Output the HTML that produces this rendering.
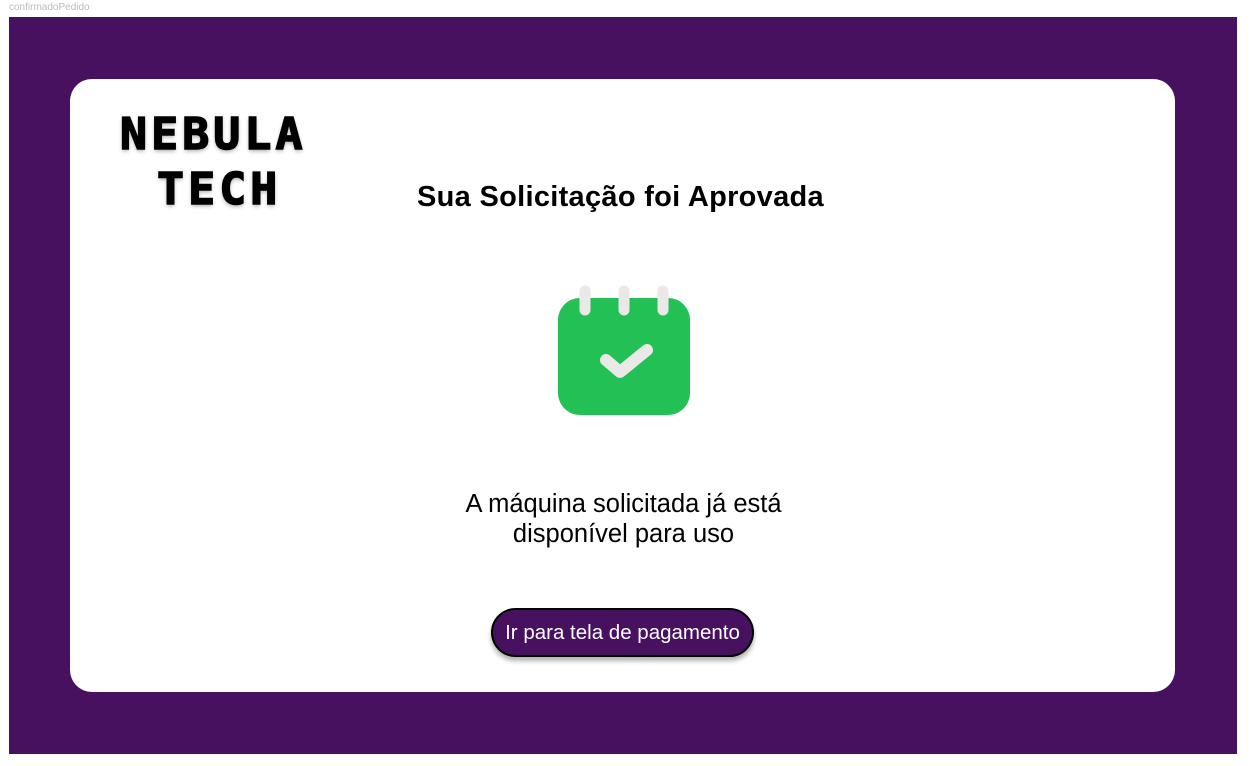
<!DOCTYPE html>
<html><head><style>
body{margin:0;width:1251px;height:766px;background:#fff;position:relative;font-family:"Liberation Sans",sans-serif;overflow:hidden}
.lbl{position:absolute;left:9px;top:2px;font-size:10px;color:#bbb}
.bg{position:absolute;left:9px;top:17px;width:1228px;height:737px;background:#471160}
.card{position:absolute;left:70px;top:79px;width:1105px;height:613px;background:#fff;border-radius:22px}
.logo{position:absolute;font-family:"DejaVu Sans Mono",monospace;font-weight:bold;font-size:44px;color:#000;text-shadow:0 2px 4px rgba(0,0,0,.35);letter-spacing:4px;transform-origin:0 0;transform:scaleX(1.02);line-height:1;-webkit-text-stroke:1.5px #000}
h1{position:absolute;left:0;width:1241px;top:181px;margin:0;text-align:center;font-size:29px;font-weight:bold;color:#000;letter-spacing:0.3px}
.txt{position:absolute;left:0;width:1247px;top:489px;text-align:center;font-size:25.5px;line-height:30px;color:#000}
.btn{position:absolute;left:491px;top:608px;width:263px;height:49px;box-sizing:border-box;background:#471160;border:2px solid #000;border-radius:25px;color:#fff;font-size:20.5px;text-align:center;line-height:45px;box-shadow:0 4px 5px rgba(0,0,0,.3)}
</style></head><body>
<div class="lbl">confirmadoPedido</div>
<div class="bg"></div>
<div class="card"></div>
<div class="logo" style="left:120px;top:113px">NEBULA</div>
<div class="logo" style="left:157px;top:168px">TECH</div>
<h1>Sua Solicitação foi Aprovada</h1>
<svg style="position:absolute;left:540px;top:270px" width="170" height="160">
<rect x="18" y="28" width="132" height="117" rx="22" fill="#22c055"/>
<g stroke="#ebe9e8" stroke-width="11" stroke-linecap="round" fill="none">
<line x1="45" y1="21" x2="45" y2="40"/><line x1="84" y1="21" x2="84" y2="40"/><line x1="123" y1="21" x2="123" y2="40"/>
<path d="M66 90 L80 102 L107 80" stroke-width="12" stroke-linejoin="round"/>
</g></svg>
<div class="txt">A máquina solicitada já está<br>disponível para uso</div>
<div class="btn">Ir para tela de pagamento</div>
</body></html>
